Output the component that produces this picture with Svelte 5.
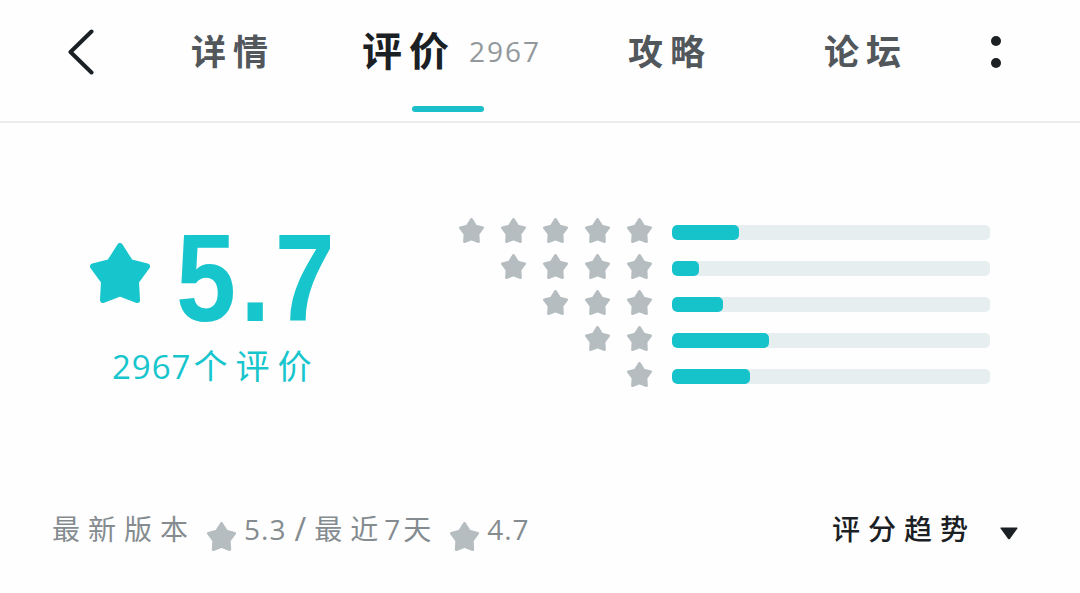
<script lang="ts">
  type Tab = { id: string; label: string; count?: number };

  const tabs: Tab[] = [
    { id: "detail", label: "详情" },
    { id: "review", label: "评价", count: 2967 },
    { id: "guide", label: "攻略" },
    { id: "forum", label: "论坛" },
  ];

  const distribution = [
    { stars: 5, percent: 21.1 },
    { stars: 4, percent: 8.5 },
    { stars: 3, percent: 16 },
    { stars: 2, percent: 30.5 },
    { stars: 1, percent: 24.5 },
  ];

  let active = $state("review");
</script>

{#snippet star()}
  <svg class="star" viewBox="0 0 60 60" aria-hidden="true">
    <path d="M30 3 40.2 19.2 57 23.4 46 38.4 47 57 30 50.4 13 57 14 38.4 3 23.4 19.8 19.2Z" />
  </svg>
{/snippet}

<div class="page">
  <header class="topbar">
    <button class="back" aria-label="返回">
      <svg viewBox="0 0 28 46" width="28" height="46">
        <path d="M24.5 2.5 3.5 23 24.5 43.5" />
      </svg>
    </button>
    <nav class="tabs">
      {#each tabs as tab (tab.id)}
        <button class="tab {tab.id}" class:active={active === tab.id} onclick={() => (active = tab.id)}>
          <span class="label">{tab.label}</span>
          {#if tab.count}
            <span class="count">{tab.count}</span>
          {/if}
        </button>
      {/each}
    </nav>
    <button class="more" aria-label="更多">
      <i></i>
      <i></i>
    </button>
  </header>

  <section class="summary">
    <div class="score">
      <div class="score-main">
        {@render star()}
        <strong>5.7</strong>
      </div>
      <p class="total"><span>2967</span>个评价</p>
    </div>
    <div class="bars">
      {#each distribution as row (row.stars)}
        <div class="bar-row">
          <div class="row-stars">
            {#each Array(row.stars) as _}
              {@render star()}
            {/each}
          </div>
          <div class="track">
            <div class="fill" style="width: {row.percent}%"></div>
          </div>
        </div>
      {/each}
    </div>
  </section>

  <footer class="footer">
    <div class="recent">
      <span class="cjk">最新版本</span>
      {@render star()}
      <span class="num">5.3</span>
      <span class="slash">/</span>
      <span class="cjk">最近</span>
      <span class="num day">7</span>
      <span class="cjk">天</span>
      {@render star()}
      <span class="num">4.7</span>
    </div>
    <button class="trend">
      <span>评分趋势</span>
      <svg viewBox="0 0 18 13" width="18" height="13" aria-hidden="true">
        <path d="M1 .5h16q1 0 .4 1L10 11.7q-1 1.2-2 0L.6 1.5Q0 .5 1 .5Z" />
      </svg>
    </button>
  </footer>
</div>

<style>
  :global(body) {
    background: #fefefe;
  }

  .page {
    width: 1080px;
    height: 593px;
    overflow: hidden;
    background: #fefefe;
    color: #1b2024;
    font-family: "Open Sans", "Noto Sans CJK SC", sans-serif;
  }

  button {
    padding: 0;
    border: 0;
    background: none;
    color: inherit;
    font: inherit;
  }

  .star {
    display: block;
    flex: none;
    fill: currentColor;
    stroke: currentColor;
    stroke-width: 6;
    stroke-linejoin: round;
  }

  .topbar {
    box-sizing: border-box;
    display: flex;
    height: 123px;
    border-bottom: 2px solid #ebebeb;
  }

  .back {
    box-sizing: border-box;
    display: flex;
    align-items: flex-start;
    width: 191px;
    padding: 29px 0 0 67px;
  }

  .back path {
    fill: none;
    stroke: #1b2024;
    stroke-width: 4;
    stroke-linecap: round;
    stroke-linejoin: round;
  }

  .tabs {
    display: flex;
    flex: 1;
  }

  .tab {
    position: relative;
    display: flex;
    align-items: center;
    height: 102px;
    color: #51575b;
    font-size: 35px;
    font-weight: 700;
    letter-spacing: 7px;
    line-height: 1;
    white-space: nowrap;
  }

  .tab.detail {
    width: 171px;
  }

  .tab.review {
    width: 266px;
  }

  .tab.guide {
    width: 196px;
  }

  .tab.active {
    color: #1b2024;
    font-size: 40px;
  }

  .tab.active::after {
    content: "";
    position: absolute;
    left: 50px;
    bottom: -10px;
    width: 72px;
    height: 6px;
    border-radius: 3px;
    background: #1bbfca;
  }

  .count {
    margin-left: 13px;
    color: #92989b;
    font-size: 28px;
    font-weight: 400;
    letter-spacing: 2px;
  }

  .more {
    display: flex;
    flex-direction: column;
    gap: 12px;
    width: 89px;
    padding-top: 36px;
  }

  .more i {
    width: 10px;
    height: 10px;
    border-radius: 50%;
    background: #1b2024;
  }

  .summary {
    display: flex;
    height: 375px;
    color: #17c5cd;
  }

  .score {
    width: 458px;
    padding-top: 107px;
  }

  .score-main {
    display: flex;
    align-items: center;
    gap: 26px;
    height: 96px;
    padding-left: 90px;
  }

  .score-main .star {
    width: 60px;
    height: 60px;
    margin-bottom: 11px;
  }

  .score-main strong {
    font-family: "Liberation Sans", Arial, sans-serif;
    font-size: 124px;
    font-weight: 700;
    line-height: 96px;
    letter-spacing: 5px;
    transform: scaleX(0.87);
    transform-origin: left;
  }

  .total {
    margin: 15px 0 0 112px;
    font-size: 34px;
    line-height: 50px;
    letter-spacing: 8px;
    white-space: nowrap;
  }

  .total span {
    font-size: 33px;
    letter-spacing: 1px;
    margin-right: 2px;
  }

  .bars {
    display: flex;
    flex-direction: column;
    gap: 10px;
    width: 532px;
    padding-top: 95px;
  }

  .bar-row {
    display: flex;
    align-items: center;
    justify-content: flex-end;
    gap: 20px;
    height: 26px;
  }

  .row-stars {
    display: flex;
    gap: 17px;
    color: #b5bdc0;
  }

  .row-stars .star {
    width: 25px;
    height: 25px;
    margin-bottom: 1px;
  }

  .track {
    width: 318px;
    height: 15px;
    margin-top: 2px;
    border-radius: 5px;
    background: #e7eeef;
    overflow: hidden;
  }

  .fill {
    height: 100%;
    border-radius: 5px;
    background: #17c3cb;
  }

  .footer {
    display: flex;
    justify-content: space-between;
    height: 62px;
    padding: 0 62px 0 52px;
    font-size: 28px;
    line-height: 62px;
    white-space: nowrap;
  }

  .recent {
    display: flex;
    color: #858c90;
  }

  .recent .star {
    width: 29px;
    height: 29px;
    margin: 24px 8px 0 11px;
    color: #b5bdc0;
  }

  .cjk,
  .trend {
    letter-spacing: 8px;
  }

  .num {
    letter-spacing: 1px;
  }

  .num.day {
    margin-left: -2px;
    margin-right: 2px;
  }

  .slash {
    margin: 0 6px 0 8px;
    font-size: 32px;
    letter-spacing: 2px;
  }

  .trend {
    display: flex;
    align-items: center;
    gap: 24px;
    height: 62px;
    font-weight: 500;
  }

  .trend svg {
    margin-top: 9px;
    fill: #1b2024;
  }
</style>
